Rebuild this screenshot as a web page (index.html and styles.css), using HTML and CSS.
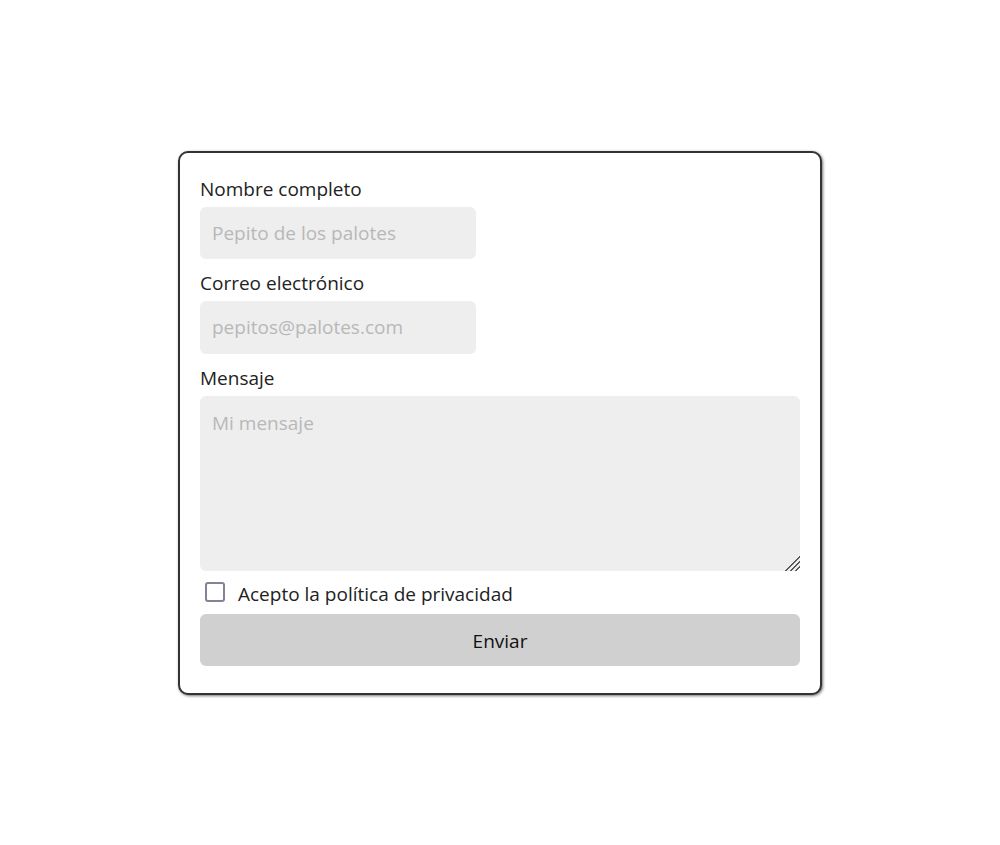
FILE: index.html
```html
<!DOCTYPE html>
<html lang="es">
<head>
<meta charset="utf-8">
<title>Contacto</title>
<link rel="stylesheet" href="styles.css">
</head>
<body>
<main class="page">
  <form class="card">
    <label class="field-label" for="nombre">Nombre completo</label>
    <input class="field field-short" id="nombre" type="text" placeholder="Pepito de los palotes">
    <label class="field-label" for="correo">Correo electrónico</label>
    <input class="field field-short" id="correo" type="email" placeholder="pepitos@palotes.com">
    <label class="field-label" for="mensaje">Mensaje</label>
    <textarea class="field field-area" id="mensaje" placeholder="Mi mensaje"></textarea>
    <label class="check-row">
      <input class="check" type="checkbox">
      <span class="check-text">Acepto la política de privacidad</span>
    </label>
    <button class="submit" type="button">Enviar</button>
  </form>
</main>
</body>
</html>
```

FILE: styles.css
```css
* {
  box-sizing: border-box;
}

html, body {
  margin: 0;
  padding: 0;
  background: #ffffff;
}

body {
  font-family: "Open Sans", "Noto Sans", "Liberation Sans", sans-serif;
  color: #222222;
}

.page {
  min-height: 845px;
  display: flex;
  align-items: center;
  justify-content: center;
}

.card {
  width: 644px;
  display: flex;
  flex-direction: column;
  gap: 8px;
  padding: 20px 20px 27px;
  border: 2px solid #333333;
  border-radius: 10px;
  box-shadow: 1px 1px 3px rgba(0, 0, 0, 0.55);
  background: #ffffff;
}

.field-label {
  font-size: 19px;
  line-height: 19px;
  padding-top: 7px;
  height: 26px;
  color: #222222;
}

.field {
  font-family: inherit;
  font-size: 19px;
  line-height: 26px;
  color: #222222;
  background: #eeeeee;
  border: none;
  border-radius: 6px;
  padding: 13px 12px;
  outline: none;
}

.field::placeholder {
  color: #b8b8b8;
}

.field-short {
  width: 276px;
  height: 52.5px;
}

.field-area {
  width: 600px;
  height: 175px;
  padding: 14px 12px 12px;
  resize: both;
  overflow-y: scroll;
}

.field-area::-webkit-scrollbar {
  width: 19px;
  height: 19px;
  background: transparent;
}

.field-area::-webkit-scrollbar-track,
.field-area::-webkit-scrollbar-thumb,
.field-area::-webkit-scrollbar-corner {
  background: transparent;
}

.field-area::-webkit-resizer {
  background: linear-gradient(135deg,
    transparent 0 49%,
    #5a5a5a 49% 55%,
    transparent 55% 65%,
    #5a5a5a 65% 71%,
    transparent 71% 81%,
    #5a5a5a 81% 87%,
    transparent 87% 100%);
}

.check-row {
  display: flex;
  align-items: center;
  gap: 13px;
  height: 27px;
  font-size: 19px;
  color: #222222;
}

.check-text {
  line-height: 20px;
  padding-top: 4px;
}

.check {
  appearance: none;
  -webkit-appearance: none;
  width: 20px;
  height: 20px;
  margin: 0 0 0 5px;
  border: 2px solid #858196;
  border-radius: 3px;
  background: #ffffff;
  flex: none;
}

.submit {
  font-family: inherit;
  width: 600px;
  height: 52px;
  font-size: 19px;
  color: #111111;
  background: #d0d0d0;
  border: none;
  border-radius: 6px;
  padding: 0;
  padding-top: 3px;
}
```
